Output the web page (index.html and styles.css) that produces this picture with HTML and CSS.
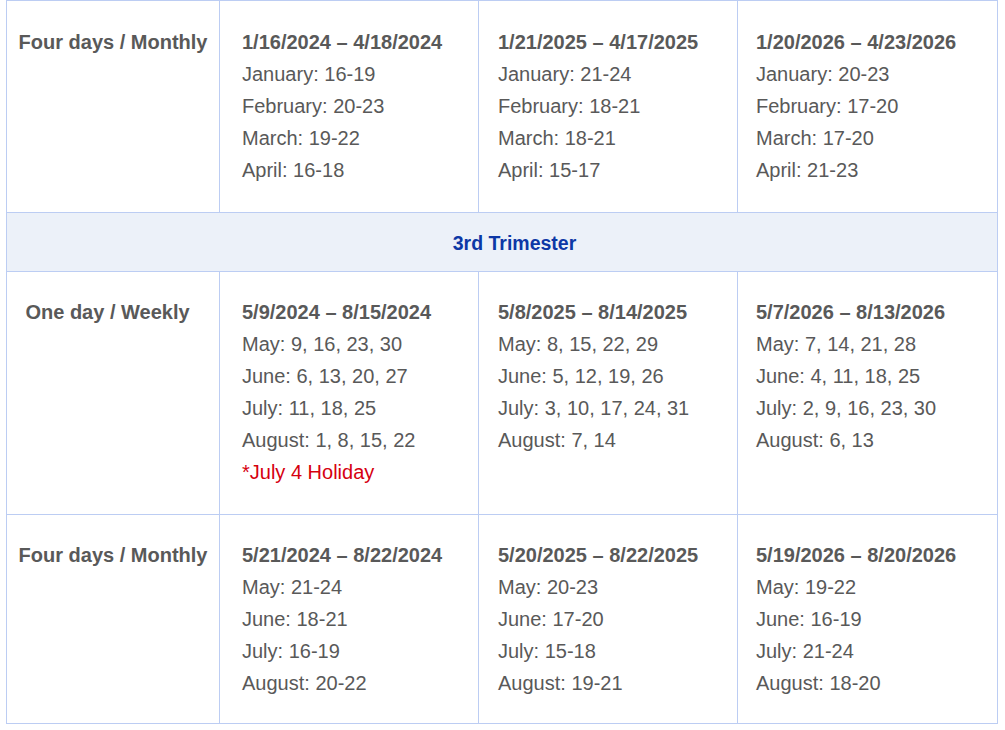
FILE: index.html
```html
<!DOCTYPE html>
<html lang="en">
<head>
<meta charset="utf-8">
<title>Schedule</title>
<link rel="stylesheet" href="styles.css">
</head>
<body>
<table class="schedule">
  <colgroup>
    <col class="c-label">
    <col class="c-year">
    <col class="c-year">
    <col class="c-year-last">
  </colgroup>
  <tbody>
    <tr class="row row-a">
      <th class="label">Four days / Monthly</th>
      <td class="y1"><div class="range">1/16/2024 – 4/18/2024</div><div>January: 16-19</div><div>February: 20-23</div><div>March: 19-22</div><div>April: 16-18</div></td>
      <td class="y2"><div class="range">1/21/2025 – 4/17/2025</div><div>January: 21-24</div><div>February: 18-21</div><div>March: 18-21</div><div>April: 15-17</div></td>
      <td class="y3"><div class="range">1/20/2026 – 4/23/2026</div><div>January: 20-23</div><div>February: 17-20</div><div>March: 17-20</div><div>April: 21-23</div></td>
    </tr>
    <tr class="section">
      <th colspan="4">3rd Trimester</th>
    </tr>
    <tr class="row row-b">
      <th class="label label-weekly">One day / Weekly</th>
      <td class="y1"><div class="range">5/9/2024 – 8/15/2024</div><div>May: 9, 16, 23, 30</div><div>June: 6, 13, 20, 27</div><div>July: 11, 18, 25</div><div>August: 1, 8, 15, 22</div><div class="holiday">*July 4 Holiday</div></td>
      <td class="y2"><div class="range">5/8/2025 – 8/14/2025</div><div>May: 8, 15, 22, 29</div><div>June: 5, 12, 19, 26</div><div>July: 3, 10, 17, 24, 31</div><div>August: 7, 14</div></td>
      <td class="y3"><div class="range">5/7/2026 – 8/13/2026</div><div>May: 7, 14, 21, 28</div><div>June: 4, 11, 18, 25</div><div>July: 2, 9, 16, 23, 30</div><div>August: 6, 13</div></td>
    </tr>
    <tr class="row row-c">
      <th class="label">Four days / Monthly</th>
      <td class="y1"><div class="range">5/21/2024 – 8/22/2024</div><div>May: 21-24</div><div>June: 18-21</div><div>July: 16-19</div><div>August: 20-22</div></td>
      <td class="y2"><div class="range">5/20/2025 – 8/22/2025</div><div>May: 20-23</div><div>June: 17-20</div><div>July: 15-18</div><div>August: 19-21</div></td>
      <td class="y3"><div class="range">5/19/2026 – 8/20/2026</div><div>May: 19-22</div><div>June: 16-19</div><div>July: 21-24</div><div>August: 18-20</div></td>
    </tr>
  </tbody>
</table>
</body>
</html>
```
FILE: styles.css
```css
html, body {
  margin: 0;
  padding: 0;
  background: #ffffff;
}

body {
  padding: 0 0 0 6px;
  font-family: "Liberation Sans", Arial, sans-serif;
  color: #595959;
}

.schedule {
  border-collapse: collapse;
  table-layout: fixed;
  width: 991px;
  font-size: 20px;
  line-height: 32px;
}

.c-label { width: 213px; }
.c-year { width: 259px; }
.c-year-last { width: 260px; }

.schedule th,
.schedule td {
  border: 1px solid #bccdf3;
  vertical-align: top;
  padding: 25px 12px 26px 22px;
  text-align: left;
  font-weight: normal;
}

.schedule td.y2 { padding-left: 19px; }
.schedule td.y3 { padding-left: 18px; }

.schedule th.label {
  font-weight: bold;
  text-align: center;
  padding-left: 4px;
  padding-right: 4px;
}

.schedule th.label-weekly {
  padding-right: 15px;
}

.range {
  font-weight: bold;
}

.holiday {
  color: #d6000f;
}

.row-b th,
.row-b td {
  padding-top: 24px;
  padding-bottom: 26px;
}

.row-c th,
.row-c td {
  padding-top: 24px;
  padding-bottom: 24px;
}

.section th {
  background: #ecf1f9;
  color: #0d38a6;
  font-weight: bold;
  font-size: 19.5px;
  text-align: center;
  vertical-align: middle;
  height: 56px;
  padding: 2px 0 0 25px;
  line-height: 24px;
}
```
